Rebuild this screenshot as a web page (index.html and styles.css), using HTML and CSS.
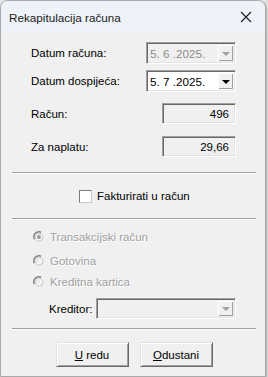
FILE: index.html
```html
<!DOCTYPE html>
<html lang="hr">
<head>
  <meta charset="UTF-8">
  <title>Rekapitulacija računa</title>
  <link rel="stylesheet" href="styles.css">
</head>
<body>
  <div class="window">
    <div class="titlebar">
      <span class="title">Rekapitulacija računa</span>
      <svg class="close" width="12" height="12" viewBox="0 0 12 12">
        <path d="M1 1 L11 11 M11 1 L1 11" stroke="#1a1a1a" stroke-width="1.1" fill="none"/>
      </svg>
    </div>

    <div class="content">
      <div class="row row-date first">
        <span class="label">Datum računa:</span>
        <div class="combo date disabled">
          <span class="combo-text">5. 6 .2025.</span>
          <span class="drop"><i class="arrow"></i></span>
        </div>
      </div>

      <div class="row row-date second">
        <span class="label">Datum dospijeća:</span>
        <div class="combo date">
          <span class="combo-text">5. 7 .2025.</span>
          <span class="drop"><i class="arrow"></i></span>
        </div>
      </div>

      <div class="row row-amount third">
        <span class="label">Račun:</span>
        <div class="field">496</div>
      </div>

      <div class="row row-amount fourth">
        <span class="label">Za naplatu:</span>
        <div class="field">29,66</div>
      </div>

      <div class="sep sep-1"></div>

      <label class="check-row">
        <span class="checkbox"></span>
        <span>Fakturirati u račun</span>
      </label>

      <div class="sep sep-2"></div>

      <div class="radio r1">
        <svg width="12" height="12" viewBox="0 0 12 12">
          <circle cx="6" cy="6" r="5.2" fill="#ececec"/>
          <path d="M1.4 8.4 A5.2 5.2 0 0 1 8.4 1.4" stroke="#7d7d7d" stroke-width="1.4" fill="none"/>
          <path d="M8.4 1.4 A5.2 5.2 0 0 1 1.4 8.4" stroke="#ffffff" stroke-width="1.4" fill="none"/>
          <circle cx="6" cy="6" r="4" fill="none" stroke="#c4c4c4" stroke-width="0.8"/>
          <circle cx="6" cy="6" r="2" fill="#9a9a9a"/>
        </svg>
        <span class="dim">Transakcijski račun</span>
      </div>

      <div class="radio r2">
        <svg width="12" height="12" viewBox="0 0 12 12">
          <circle cx="6" cy="6" r="5.2" fill="#ececec"/>
          <path d="M1.4 8.4 A5.2 5.2 0 0 1 8.4 1.4" stroke="#7d7d7d" stroke-width="1.4" fill="none"/>
          <path d="M8.4 1.4 A5.2 5.2 0 0 1 1.4 8.4" stroke="#ffffff" stroke-width="1.4" fill="none"/>
          <circle cx="6" cy="6" r="4" fill="none" stroke="#c4c4c4" stroke-width="0.8"/>
        </svg>
        <span class="dim">Gotovina</span>
      </div>

      <div class="radio r3">
        <svg width="12" height="12" viewBox="0 0 12 12">
          <circle cx="6" cy="6" r="5.2" fill="#ececec"/>
          <path d="M1.4 8.4 A5.2 5.2 0 0 1 8.4 1.4" stroke="#7d7d7d" stroke-width="1.4" fill="none"/>
          <path d="M8.4 1.4 A5.2 5.2 0 0 1 1.4 8.4" stroke="#ffffff" stroke-width="1.4" fill="none"/>
          <circle cx="6" cy="6" r="4" fill="none" stroke="#c4c4c4" stroke-width="0.8"/>
        </svg>
        <span class="dim">Kreditna kartica</span>
      </div>

      <div class="row-kreditor">
        <span class="label">Kreditor:</span>
        <div class="combo wide disabled">
          <span class="combo-text"></span>
          <span class="drop"><i class="arrow"></i></span>
        </div>
      </div>

      <div class="sep sep-3"></div>

      <div class="buttons">
        <button type="button" class="btn"><u>U</u> redu</button>
        <button type="button" class="btn"><u>O</u>dustani</button>
      </div>
    </div>
  </div>
</body>
</html>
```

FILE: styles.css
```css
html, body {
  margin: 0;
  padding: 0;
}
body {
  background: #e4e4e4;
  width: 268px;
  height: 377px;
  overflow: hidden;
  font-family: "Liberation Sans", Arial, sans-serif;
  font-size: 11.5px;
  color: #000;
}
.window {
  width: 264px;
  border: 1px solid #a9a9a9;
  border-radius: 8px 8px 0 0;
  background: #f0f0f0;
  box-shadow: 1px 1px 2px rgba(0,0,0,0.25);
  overflow: hidden;
}
.titlebar {
  height: 31px;
  background: #eef3f9;
  display: flex;
  align-items: center;
  justify-content: space-between;
  padding: 0 13px 0 8px;
}
.title {
  font-size: 11.7px;
  color: #1a1a1a;
  margin-top: 1px;
}
.close {
  display: block;
  margin-top: 1px;
}
.content {
  display: flex;
  flex-direction: column;
  padding: 0 9px 9px 11px;
}
.row {
  display: flex;
  align-items: center;
  justify-content: space-between;
  padding: 0 20px 0 19px;
}
.row-date { height: 22px; }
.row-amount { height: 21px; }
.first { margin-top: 10px; }
.second { margin-top: 6px; }
.third { margin-top: 11px; }
.fourth { margin-top: 12px; }

.combo {
  box-sizing: border-box;
  height: 22px;
  display: flex;
  align-items: stretch;
  border: 1px solid;
  border-color: #a0a0a0 #fff #fff #a0a0a0;
  box-shadow: inset 1px 1px 0 #696969, inset -1px -1px 0 #e3e3e3;
  background: #fff;
  padding: 2px 2px 2px 3px;
}
.combo.date { width: 90px; }
.combo.wide { width: 140px; height: 21px; }
.combo.disabled { background: #f0f0f0; color: #8c8c8c; }
.combo-text {
  flex: 1;
  display: flex;
  align-items: center;
  font-size: 11.7px;
}
.drop {
  width: 15px;
  display: flex;
  align-items: center;
  justify-content: center;
  background: #f0f0f0;
  box-shadow: inset 1px 1px 0 #fff, inset -1px -1px 0 #a0a0a0;
}
.arrow {
  width: 0;
  height: 0;
  border-left: 4px solid transparent;
  border-right: 4px solid transparent;
  border-top: 4px solid #000;
  margin-top: 1px;
}
.disabled .arrow { border-top-color: #a0a0a0; }

.field {
  box-sizing: border-box;
  width: 74px;
  height: 21px;
  border: 1px solid;
  border-color: #a0a0a0 #fff #fff #a0a0a0;
  box-shadow: inset 1px 1px 0 #696969, inset -1px -1px 0 #e3e3e3;
  text-align: right;
  padding: 4px 6px 0 0;
}

.sep {
  height: 1px;
  background: #a0a0a0;
  border-bottom: 1px solid #fff;
}
.sep-1 { margin-top: 15px; }
.sep-2 { margin-top: 15px; }
.sep-3 { margin-top: 9px; }

.check-row {
  display: flex;
  align-items: center;
  gap: 5px;
  height: 14px;
  margin-top: 15px;
  padding-left: 67px;
}
.checkbox {
  box-sizing: border-box;
  width: 13px;
  height: 13px;
  background: #fff;
  border: 1px solid;
  border-color: #7a7a7a #c8c8c8 #c8c8c8 #7a7a7a;
}

.radio {
  display: flex;
  align-items: center;
  gap: 5px;
  height: 14px;
  padding-left: 21px;
}
.radio svg { display: block; }
.r1 { margin-top: 10px; }
.r2 { margin-top: 10px; }
.r3 { margin-top: 7px; }
.dim {
  color: #a0a0a0;
  text-shadow: 1px 1px 0 #fff;
}

.row-kreditor {
  display: flex;
  align-items: center;
  justify-content: space-between;
  height: 21px;
  margin-top: 9px;
  padding: 0 20px 0 37px;
}

.buttons {
  display: flex;
  justify-content: center;
  gap: 11px;
  margin-top: 12px;
}
.btn {
  box-sizing: border-box;
  width: 73px;
  height: 25px;
  font-family: "Liberation Sans", Arial, sans-serif;
  font-size: 11.5px;
  color: #000;
  background: #f0f0f0;
  border: 1px solid;
  border-color: #e3e3e3 #696969 #696969 #e3e3e3;
  box-shadow: inset 1px 1px 0 #fff, inset -1px -1px 0 #a0a0a0;
  padding: 0;
}
```
